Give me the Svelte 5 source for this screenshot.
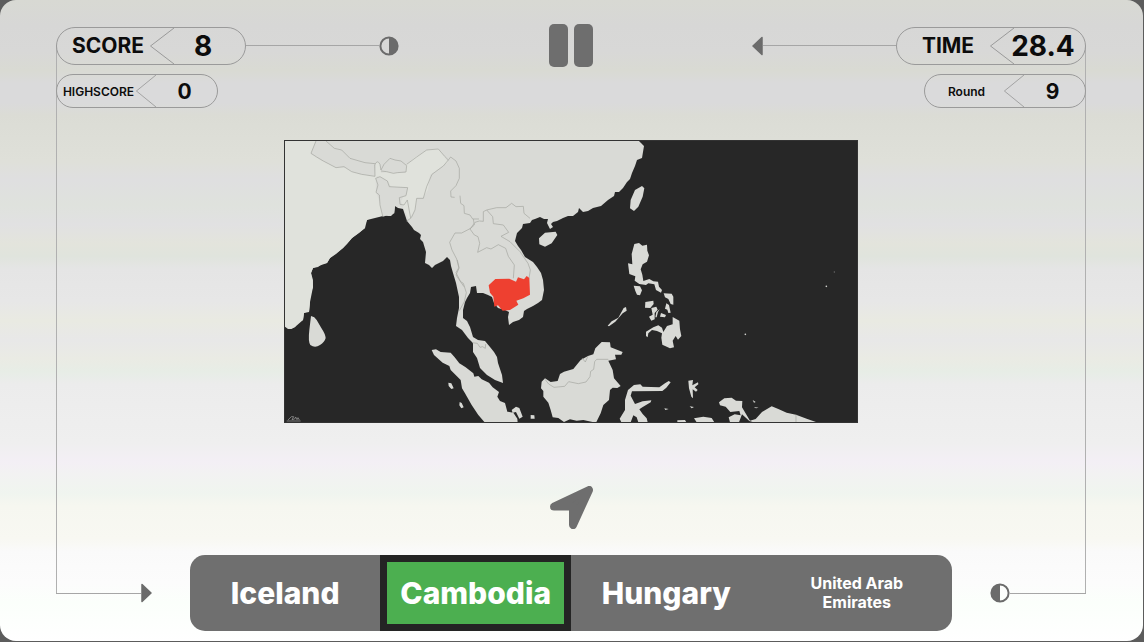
<script>
  const score = 8;
  const highscore = 0;
  const time = '28.4';
  const round = 9;
  const answers = ['Iceland', 'Cambodia', 'Hungary', 'United Arab Emirates'];
  let chosen = $state('Cambodia');
</script>

{#snippet pill(label, value, small)}
  <div class="pill" class:small>
    <span class="label">{label}</span>
    <svg class="chevron" viewBox="0 0 24 36" preserveAspectRatio="none" aria-hidden="true">
      <path d="M24 0 L0.5 18 L24 36" />
    </svg>
    <span class="value">{value}</span>
  </div>
{/snippet}

{#snippet halfDisc(flip)}
  <svg class="disc" class:flip viewBox="0 0 20 20" aria-hidden="true">
    <circle cx="10" cy="10" r="8.6" />
    <path d="M10 1.5 A8.5 8.5 0 0 1 10 18.5 Z" />
  </svg>
{/snippet}

{#snippet arrow(flip)}
  <svg class="arrow" class:flip viewBox="0 0 11 20" aria-hidden="true">
    <path d="M1 1.5 L10 10 L1 18.5 Z" />
  </svg>
{/snippet}

<main class="board">
  <div class="rails"></div>

  <header>
    <div class="group">
      {@render pill('SCORE', score, false)}
      <span class="line"></span>
      {@render halfDisc(false)}
    </div>
    <button class="pause" aria-label="Pause"><span></span><span></span></button>
    <div class="group end">
      {@render arrow(true)}
      <span class="line"></span>
      {@render pill('TIME', time, false)}
    </div>
    <div class="group second">{@render pill('HIGHSCORE', highscore, true)}</div>
    <div class="group end last">{@render pill('Round', round, true)}</div>
  </header>

  <section class="stage">
    <svg class="map" viewBox="284 140 574 283" role="img" aria-label="Map with one country in red">
      <rect class="sea" x="284" y="140" width="574" height="283" />
      <path
        class="land"
        d="M284 140H638L641 143L644 146L643 152L642 158L637 160L635 166L632 173L630 179L627 182L623 188L619 192L615 192L614 196L608 200L601 206L593 208L588 211L583 212L581 210L579 208L578 212L573 216L568 216L563 218L557 221L553 222L551 224L553 227L550 229L547 223L548 219L544 219L540 217L535 219L532 220L530 223L523 224L522 228L517 233L515 241L518 246L521 250L525 257L533 262L537 267L541 273L543 280L544 290L542 300L538 303L533 306L527 309L524 311L523 317L519 320L513 322L509 325L508 317L509 312L505 310L498 308L494 303L492 297L488 295L483 293L477 293L476 286L471 287L470 293L467 298L465 302L463 310L463 318L467 321L470 327L473 337L478 340L485 341L490 347L494 352L497 357L498 363L500 369L502 375L503 383L495 380L487 375L480 368L477 358L473 352L473 343L468 338L462 330L456 326L457 318L459 308L459 297L456 283L453 273L451 266L450 260L447 257L443 261L435 265L432 268L429 265L425 263L426 252L423 242L420 239L421 235L419 233L414 230L412 227L407 221L405 215L403 209L398 208L395 206L394 213L391 216L388 216L383 215L377 217L372 217L367 220L365 224L365 228L359 233L352 238L347 244L343 248L336 254L330 258L327 263L322 264L318 267L313 268L311 273L313 280L313 287L310 295L310 302L309 312L306 312L304 313L303 320L297 323L295 327L291 329L288 329L284 326Z"
      />
      <path class="india" d="M284 140H316L311 154L322 161L336 167L348 168L360 174L373 176L376 162L379 162L381 173L389 172L405 173L406 165L414 158L425 151L432 149L438 149L441 152L448 162L436 171L430 175L428 190L423 198L417 198L415 210L409 220L406 213L403 208L398 208L403 197L400 190L407 188L408 187H391L388 181L377 176L376 185L380 200L383 216L367 220L365 228L352 238L343 248L330 258L327 263L313 268L311 273L313 287L310 302L309 312L304 313L303 320L295 327L291 329L284 326Z" />
      <g transform="translate(280 135) scale(.33333)">
        <path class="land" d="M108 18 L93 55 L130 78 L168 98 L192 93 L215 110 L245 118 L285 124 L288 88 L255 83 L210 70 L185 45 L163 40 L138 20Z M303 105 L320 75 L345 75 L378 92 L378 111 L340 115Z M287 130 L300 125 L322 138 L328 155 L383 158 L380 180 L360 190 L370 218 L345 213 L343 235 L308 245 L300 205 L288 170Z" />
        <path class="border" d="M108 18 L93 55 L110 66 L130 78 L168 98 L192 95 L215 110 L245 118 L285 124 M138 18 L163 40 L185 45 L210 70 L255 83 L285 86 M285 124 L284 90 Q292 72 300 88 L303 105 L312 88 L330 70 L345 75 L363 78 L380 92 L378 111 L352 113 L340 115 L320 110 L303 108 M287 130 L300 125 L322 138 L328 155 L383 158 L378 182 L358 188 L360 208 L372 210 L382 195 L392 250 L380 258 M287 130 L294 150 L288 172 L298 180 L300 210 L308 243 M380 88 L410 66 L440 45 L475 42 L494 64 L505 75 L490 93 L456 118 L440 155 L430 190 L410 190 L405 225 L394 248 M505 75 L512 66 L528 78 L538 100 L538 130 L528 152 L512 168 L513 186 L524 187 M540 182 L542 205 L552 212 L553 235 L570 240 L578 252 L597 252 M580 252 L583 270 L572 280 L545 294 L525 294 L509 322 L516 345 L530 372 L537 400 L528 420 L540 438 L552 455" />
      </g>
      <g transform="translate(430 135) scale(.33333)">
        <path class="border" d="M120 282 L135 262 L148 258 L160 259 L160 230 L170 225 L188 245 L190 266 L220 270 L236 292 L213 304 L240 320 L270 350 L294 385 L301 405 L297 430 M170 225 L200 218 L228 218 L245 205 L258 215 L280 214 L282 235 L300 250 M120 282 L133 300 L144 305 L149 325 L143 352 L170 338 L183 342 L205 329 L227 340 L235 364 L253 390 L250 430" />
        <path class="land" d="M636 153 L643 160 L638 185 L625 215 L612 228 L600 220 L602 195 L615 165Z M327 310 L345 293 L377 290 L382 300 L365 325 L345 335 L328 328Z" />
      </g>
      <g transform="translate(280 270) scale(.33333)">
        <path class="land" d="M93 138 Q104 140 110 150 L124 174 Q136 192 137 204 Q134 216 120 225 Q105 235 91 225 Q84 215 88 180Z M505 338 L514 340 L521 355 L514 357 L506 348Z M539 396 L545 399 L551 412 L544 415 L538 406Z" />
        <path class="mark" d="M20 453 H62 M24 450 L34 440 L41 440 L36 449 L44 447 L47 441 L51 449 L54 443 L58 450" />
      </g>
      <g transform="translate(430 260) scale(.33333)">
        <path class="border" d="M82 0 L87 22 L78 38 L92 65 L100 70 L109 98 L103 125 L88 152 M126 248 L142 250 L150 262 L158 260 L166 265 L167 252" />
        <path class="target" d="M176 76 L196 57 L238 56 L258 65 L264 52 L282 58 L290 48 L298 54 L300 104 L280 115 L259 122 L265 134 L240 150 L218 152 L204 136 L193 140 L190 110 L180 98Z" />
        <path class="land" d="M5 270 L18 268 L32 276 L62 278 L74 292 L88 310 L107 322 L130 340 L133 350 L145 348 L155 358 L177 368 L188 382 L207 396 L202 410 L210 423 L225 429 L232 455 L250 458 L262 476 L263 488 L165 488 L145 465 L125 435 L105 400 L96 385 L92 360 L62 330 L58 318 L38 308 L12 285Z M245 450 L258 440 L268 444 L278 470 L268 476 L258 456 L248 458Z M302 465 L313 466 L314 476 L302 476Z" />
        <path class="land" d="M345 355 L362 366 L383 363 L390 342 L402 335 L430 327 L452 300 L474 288 L490 283 L496 265 L515 246 L540 247 L542 262 L578 276 L574 284 L555 284 L558 298 L535 302 L548 330 L552 355 L572 378 L562 384 L548 383 L540 390 L537 420 L520 435 L512 460 L498 488 L460 480 L440 482 L420 478 L402 486 L385 474 L368 472 L362 450 L355 428 L340 410 L340 393 L333 385 L335 365Z M533 197 L545 184 L565 173 L581 144 L588 141 L590 152 L578 160 L556 185 L537 199Z" />
        <path class="border" d="M345 358 L356 372 L372 382 L404 379 L416 365 L445 371 L468 366 L480 350 L482 334 L491 328 L494 305 L500 298 L535 298 M456 294 L466 306 L474 288" />
      </g>
      <g transform="translate(590 230) scale(.33333)">
        <path class="land" d="M133 42 L147 39 L157 47 L171 44 L172 62 L177 76 L171 95 L158 103 L152 118 L157 134 L160 153 L178 147 L190 154 L204 155 L207 170 L216 180 L213 188 L198 180 L193 163 L175 160 L168 165 L148 162 L134 152 L136 139 L118 132 L114 100 L127 103 L125 72Z" />
        <path class="land" d="M131 167 L150 169 L156 181 L150 196 L141 194 L136 183Z M221 190 L245 191 L250 200 L250 224 L242 222 L235 207 L225 202Z M166 216 L190 212 L191 222 L181 234 L165 233Z M184 234 L199 230 L203 239 L194 249 L194 268 L184 272 L177 260 L188 254Z M229 220 L237 225 L242 248 L235 249 L232 239 L225 236Z M209 238 L204 246 L200 262 L196 262 L199 246Z M213 249 L228 255 L225 262 L210 260Z" />
        <path class="land" d="M168 305 L190 292 L205 286 L216 293 L220 306 L231 288 L248 283 L248 261 L268 272 L270 298 L274 318 L264 329 L257 318 L248 332 L252 352 L240 355 L217 344 L214 323 L216 310 L201 303 L186 300 L175 310 L173 322 L168 318Z" />
        <path class="land" d="M114 480 L132 465 L151 463 L158 470 L208 472 L225 460 L236 453 L242 457 L229 473 L217 483 L126 484 L122 497 L135 522 L158 514 L184 511 L182 517 L157 532 L148 538 L158 552 L170 565 L173 577 L145 577 L140 562 L130 556 L122 577 L94 577 L89 566 L105 540 L105 510Z" />
        <path class="land" d="M295 452 L309 450 L307 466 L324 457 L325 463 L314 472 L323 480 L318 485 L308 478 L309 505 L304 500 L297 475Z M299 529 L312 531 L305 535Z M223 535 L236 537 L226 540Z M262 571 L285 570 L289 577 L262 577Z M312 565 L340 560 L365 564 L373 577 L320 577Z M387 517 L403 505 L425 503 L438 512 L457 513 L456 532 L480 572 L497 567 L516 546 L545 529 L565 537 L590 548 L618 554 L650 566 L680 577 L420 577 L416 562 L434 553 L452 556 L448 543 L421 546 L407 530 L390 526Z M488 510 L497 516 L492 518Z M491 531 L506 533 L498 535Z" />
        <path class="waters" d="M456 553 L478 573 L490 577 L447 577Z" />
        <path class="border" d="M618 554 V577" />
        <circle class="land" cx="709" cy="169" r="2.5" />
        <circle class="land" cx="466" cy="313" r="2.5" />
        <circle class="land dim" cx="733" cy="126" r="2" />
      </g>
      <rect class="frame" x="284.5" y="140.5" width="573" height="282" />
    </svg>

    <svg class="compass" viewBox="0 0 43 43" aria-hidden="true">
      <path d="M4 20.5 L39 4 L23 39 V20.5 Z" />
    </svg>
  </section>

  <footer>
    <div class="lead">
      <span class="line"></span>
      {@render arrow(false)}
    </div>
    <div class="answers">
      {#each answers as answer}
        <button
          class:long={answer.length > 12}
          class:chosen={answer === chosen}
          onclick={() => (chosen = answer)}>{answer}</button>
      {/each}
    </div>
    <div class="lead tail">
      {@render halfDisc(true)}
      <span class="line"></span>
    </div>
  </footer>
</main>

<style>
  :global(body) {
    background: #5c5c5c;
    font-family: Inter, 'Liberation Sans', sans-serif;
  }

  .board {
    box-sizing: border-box;
    display: grid;
    grid-template: auto 1fr auto / minmax(0, 1fr);
    min-height: calc(100vh - 1px);
    margin: 0 1px 1px 0;
    padding: 24px 57px 10px 56px;
    border-radius: 16px;
    background: linear-gradient(
      #d8d9d3 0%,
      #d7d7d6 4%,
      #d8d8d7 8%,
      #d9dad3 11%,
      #dadadb 13%,
      #dadadb 16%,
      #dbdcd5 18%,
      #dfe0d9 25%,
      #dfdfe0 28%,
      #dfe2dd 32%,
      #e1e1e2 35%,
      #e3e4dc 38%,
      #e0e4dd 40%,
      #e5e5e5 42%,
      #e7e7e7 47%,
      #e9eae2 50%,
      #e8e8e8 53%,
      #eaebe4 56%,
      #e7ede6 58%,
      #ececec 60%,
      #efefef 69%,
      #f3eff5 72%,
      #f2f2f2 74%,
      #f0f5ef 77%,
      #f6f7f0 79%,
      #f8f8f2 84%,
      #fafafa 86%,
      #fcfcfc 91%,
      #fbfffb 94%,
      #ffffff 100%
    );
    color: #0c0c0c;
  }

  .rails {
    grid-area: 1 / 1 / -1 / -1;
    margin: 21px 0 38px;
    border: solid #b0b0b0;
    border-width: 0 1px;
  }

  header {
    grid-area: 1 / 1;
    display: grid;
    grid-template-columns: 1fr auto 1fr;
    align-items: center;
    row-gap: 7px;
  }

  .group {
    display: flex;
    align-items: center;
  }

  .end {
    justify-content: flex-end;
  }

  .last {
    grid-column: 3;
  }

  .line {
    height: 1px;
    background: #a6a6a6;
  }

  .group .line {
    flex: 0 1 27%;
  }

  .pill {
    box-sizing: border-box;
    display: flex;
    align-items: center;
    width: 190px;
    height: 38px;
    padding-left: 9px;
    border: 1px solid #9a9a9a;
    border-radius: 19px;
    font-weight: 700;
  }

  .label {
    flex: 1;
    text-align: center;
    font-size: 21px;
  }

  .chevron {
    width: 24px;
    height: 36px;
    fill: none;
    stroke: #9a9a9a;
  }

  .value {
    width: 84px;
    margin-left: -13px;
    text-align: center;
    font-size: 28px;
  }

  .small {
    width: 162px;
    height: 34px;
    padding-left: 4px;
  }

  .small .label {
    font-size: 12px;
    font-weight: 600;
  }

  .small .chevron {
    width: 20px;
    height: 32px;
  }

  .small .value {
    width: 65px;
    margin-left: -4px;
    font-size: 21px;
  }

  .disc {
    width: 20px;
    height: 20px;
    fill: #6b6b6b;
  }

  .disc circle {
    fill: none;
    stroke: #6b6b6b;
    stroke-width: 2;
  }

  .arrow {
    width: 11px;
    height: 20px;
    fill: #6b6b6b;
    stroke: #6b6b6b;
    stroke-width: 1.5;
    stroke-linejoin: round;
  }

  .flip {
    transform: scaleX(-1);
  }

  .pause {
    display: flex;
    gap: 6px;
    padding: 0;
    border: 0;
    background: none;
    cursor: pointer;
  }

  .pause span {
    width: 19px;
    height: 43px;
    border-radius: 5px;
    background: #6e6e6e;
  }

  .stage {
    grid-area: 2 / 1;
    display: flex;
    flex-direction: column;
    align-items: center;
    justify-content: space-between;
    gap: 32px;
    padding: 32px 16px 26px;
  }

  .map {
    width: 100%;
    max-width: 574px;
  }

  .sea,
  .waters {
    fill: #272727;
  }

  .land {
    fill: #d9dad6;
  }

  .india {
    fill: #e0e2dc;
  }

  .dim {
    opacity: 0.4;
  }

  .border {
    fill: none;
    stroke: #a3a49f;
    stroke-width: 2;
    stroke-linejoin: round;
  }

  .mark {
    fill: none;
    stroke: #a5a5a5;
    stroke-width: 2;
  }

  .target {
    fill: #ee4030;
  }

  .frame {
    fill: none;
    stroke: #333333;
  }

  .compass {
    width: 43px;
    height: 43px;
    fill: #6e6e6e;
    stroke: #6e6e6e;
    stroke-width: 8;
    stroke-linejoin: round;
  }

  footer {
    grid-area: 3 / 1;
    display: grid;
    grid-template-columns: 1fr 74% 1fr;
    align-items: center;
  }

  .lead {
    display: flex;
    align-items: center;
    padding-right: 38px;
  }

  .tail {
    padding: 0 0 0 38px;
  }

  .lead .line {
    flex: 1;
  }

  .answers {
    display: grid;
    grid-template-columns: repeat(4, minmax(0, 1fr));
    min-height: 76px;
    overflow: hidden;
    border-radius: 15px;
    background: #6f6f6f;
  }

  .answers button {
    padding: 0;
    border: 0;
    background: none;
    color: #ffffff;
    font: 800 30px/36px Inter, 'Liberation Sans', sans-serif;
    cursor: pointer;
  }

  .answers .long {
    padding: 0 32px;
    font-size: 16px;
    font-weight: 700;
    line-height: 19px;
  }

  .answers .chosen {
    border: 7px solid #242424;
    background: #4caf50;
  }
</style>
